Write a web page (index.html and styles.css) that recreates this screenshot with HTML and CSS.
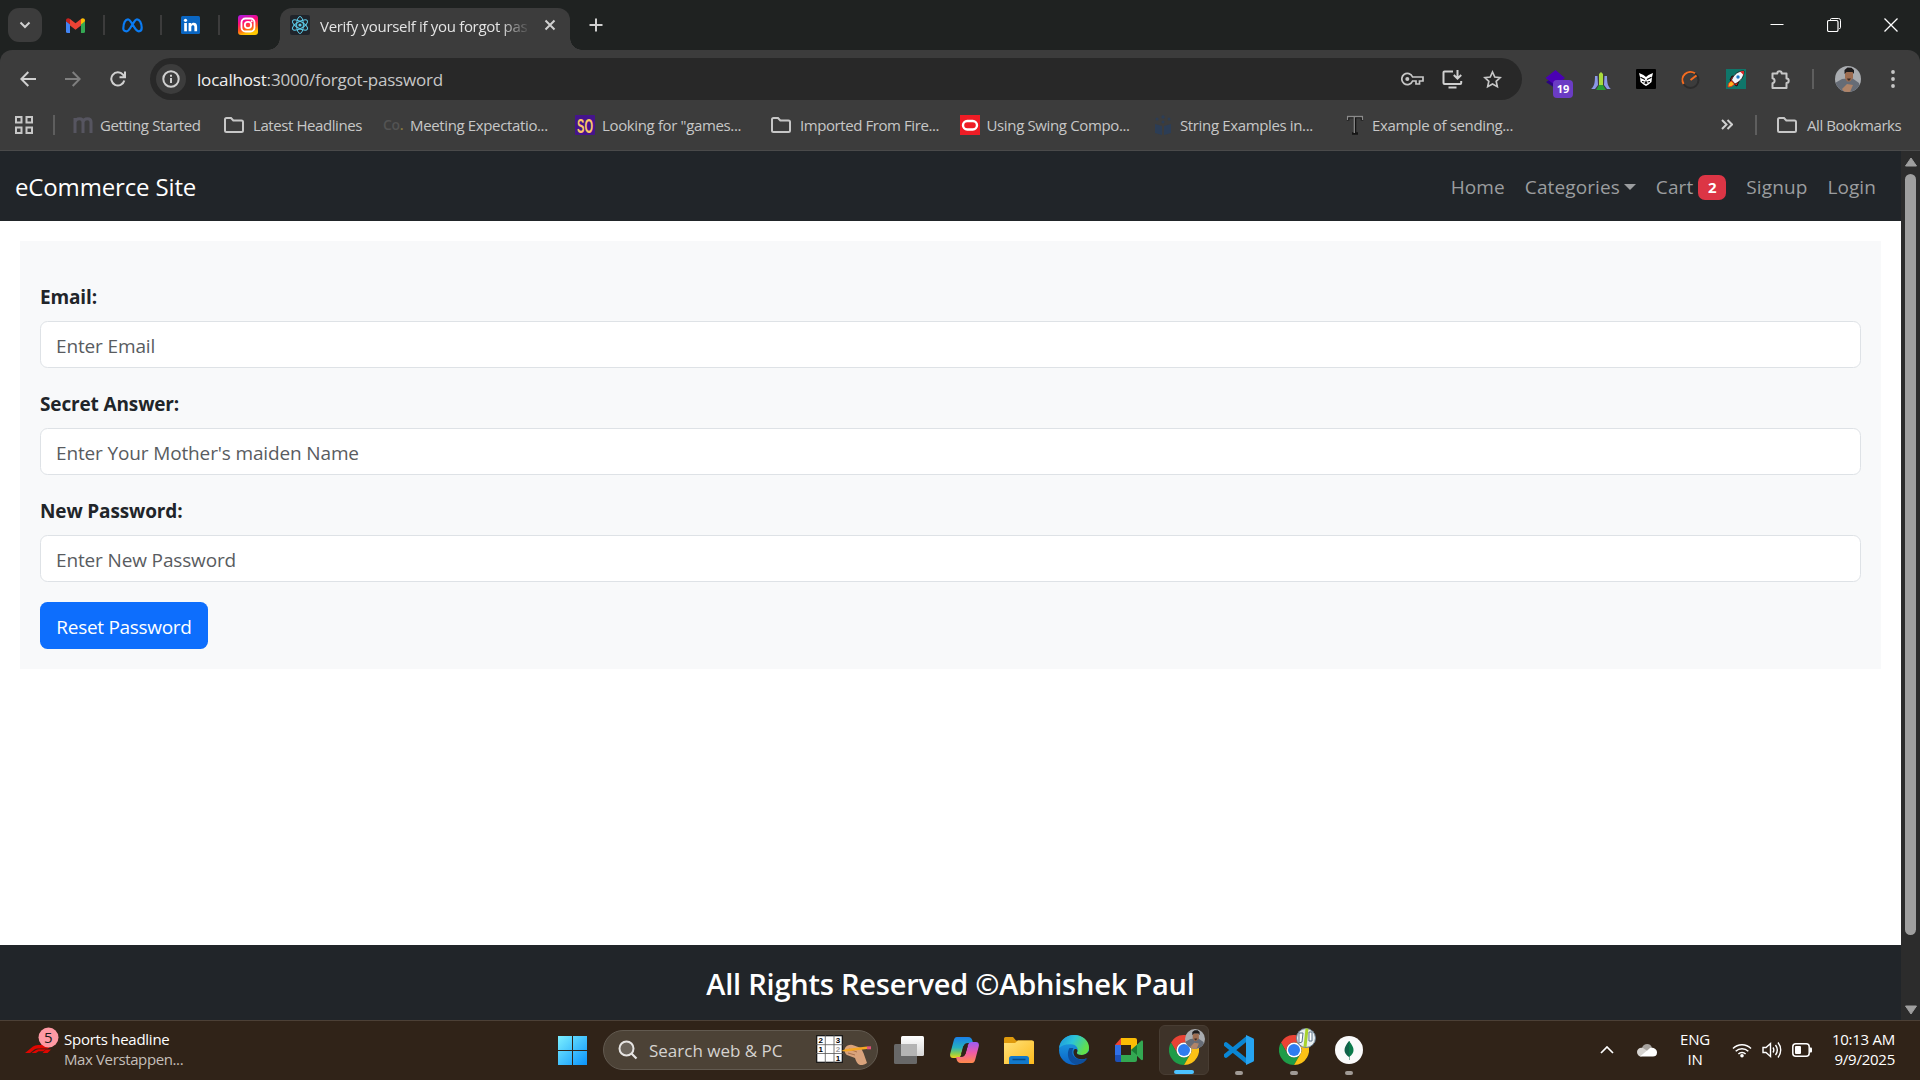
FILE: index.html
```html
<!DOCTYPE html>
<html lang="en">
<head>
<meta charset="utf-8">
<title>Verify yourself if you forgot password</title>
<link rel="stylesheet" href="styles.css">
</head>
<body>
<svg class="defs" width="0" height="0" aria-hidden="true">
  <defs>
    <linearGradient id="ig" x1="0" y1="0" x2="0.3" y2="1"><stop offset="0" stop-color="#a21df0"/><stop offset=".4" stop-color="#ff0a7a"/><stop offset=".75" stop-color="#ff5a1c"/><stop offset="1" stop-color="#ffc800"/></linearGradient>
    <linearGradient id="win" x1="0" y1="0" x2="1" y2="1"><stop offset="0" stop-color="#7cf0ff"/><stop offset="1" stop-color="#0a93fb"/></linearGradient>
    <linearGradient id="tv" x1="0" y1="0" x2="0" y2="1"><stop offset="0" stop-color="#fff"/><stop offset="1" stop-color="#d6d6d6"/></linearGradient>
    <linearGradient id="cpA" x1="0" y1="0" x2="0" y2="1"><stop offset="0" stop-color="#1a7fe8"/><stop offset=".5" stop-color="#26b0c0"/><stop offset=".8" stop-color="#8ed04a"/><stop offset="1" stop-color="#f2d21c"/></linearGradient>
    <linearGradient id="cpB" x1="0" y1="0" x2="0" y2="1"><stop offset="0" stop-color="#9a5cf5"/><stop offset=".5" stop-color="#ee5aa8"/><stop offset="1" stop-color="#ff8a4a"/></linearGradient>
    <linearGradient id="fold" x1="0" y1="0" x2="1" y2="1"><stop offset="0" stop-color="#ffe27a"/><stop offset="1" stop-color="#fdba1c"/></linearGradient>
    <linearGradient id="edA" x1="0" y1="0" x2="1" y2=".4"><stop offset="0" stop-color="#1a8fe0"/><stop offset=".5" stop-color="#2cc4d8"/><stop offset="1" stop-color="#62e04a"/></linearGradient>
    <linearGradient id="edB" x1="0" y1="0" x2="0" y2="1"><stop offset="0" stop-color="#1fa6e8"/><stop offset="1" stop-color="#0b62c4"/></linearGradient>
    <symbol id="chrome" viewBox="0 0 48 48">
      <path fill="#ea4335" d="M24 12h20.8A24 24 0 0 0 3.2 12l10.4 18A12 12 0 0 1 24 12z"/>
      <path fill="#1e9c48" d="M13.6 30 3.2 12A24 24 0 0 0 24 48l10.4-18a12 12 0 0 1-20.8 0z"/>
      <path fill="#fbc116" d="M34.4 30 24 48a24 24 0 0 0 20.8-36H24a12 12 0 0 1 10.4 18z"/>
      <circle cx="24" cy="24" r="12" fill="#fff"/><circle cx="24" cy="24" r="9.6" fill="#2f7cf0"/>
    </symbol>
    <symbol id="folder" viewBox="0 0 22 18"><path d="M2 3.5a1.5 1.5 0 0 1 1.500-1.500H8l2.300 2.500H18.500A1.500 1.500 0 0 1 20 6v8.500a1.500 1.500 0 0 1-1.500 1.500h-15A1.500 1.500 0 0 1 2 14.500z" fill="none" stroke="#c7c7c7" stroke-width="2"/></symbol>
    <symbol id="face" viewBox="0 0 26 26">
      <clipPath id="faceclip"><circle cx="13" cy="13" r="13"/></clipPath>
      <g clip-path="url(#faceclip)"><rect width="26" height="26" fill="#a9acb0"/><path d="M0 26V17l7-4 10-1 7 5 2 9z" fill="#666c76"/><path d="M7 23l5-5 6 1-3 7H9z" fill="#b08468"/><path d="M10 6h8v6l-3 3.500h-3L10 12z" fill="#9d6d51"/><path d="M9.500 8V4l3-2.500 4 .2L19 4v4l-1.500-2h-6z" fill="#1d1b1c"/><path d="M12 12.500h4l-1.500 2h-1.500z" fill="#3b2a25"/></g>
    </symbol>
  </defs>
</svg>

<div class="screen">
  <header class="tabstrip">
    <div class="tab-search"><svg width="12" height="8" viewBox="0 0 12 8"><path d="M1.500 1.500 6 6l4.500-4.500" class="ln2"/></svg></div>
    <div class="pin divided"><svg width="19" height="15" viewBox="0 0 19 15"><path fill="#4285f4" d="M0 3v10.500A1.500 1.500 0 0 0 1.500 15H4V6z"/><path fill="#34a853" d="M15 15h2.500a1.500 1.500 0 0 0 1.500-1.500V3l-4 3z"/><path fill="#ea4335" d="M4 1v6.500l5.500 4.200L15 7.500V1L9.500 5.200z"/><path fill="#c5221f" d="M0 3.200 4 6.500V1C2.500-.7 0 .3 0 2.200z"/><path fill="#fbbc04" d="M19 3.200 15 6.500V1c1.500-1.700 4-.7 4 1.200z"/></svg></div>
    <div class="pin divided"><svg width="21" height="15" viewBox="0 0 21 15"><path d="M1.300 10.500C1.300 5 3.500 1.300 6 1.300c3.500 0 6.500 12 10.800 12 2 0 2.900-1.300 2.900-3.500C19.700 5 17.500 1.300 15 1.300c-3.500 0-6.500 12-10.500 12-2.200 0-3.200-1.200-3.200-2.800z" fill="none" stroke="#0a7bf2" stroke-width="2.200"/></svg></div>
    <div class="pin divided"><svg width="19" height="18" viewBox="0 0 19 18"><rect width="19" height="18" rx="1.500" fill="#0a66c2"/><g fill="#fff"><circle cx="4.500" cy="4.300" r="1.600"/><rect x="3.200" y="7" width="2.700" height="8.300"/><path d="M7.600 7h2.600v1.200c1.400-2.200 5.900-1.900 5.900 2.300v4.800h-2.700v-4.200c0-2.600-3.100-2.300-3.100 0v4.200H7.600z"/></g></svg></div>
    <div class="pin"><svg width="20" height="20" viewBox="0 0 20 20"><rect width="20" height="20" rx="3" fill="url(#ig)"/><g fill="none" stroke="#fff" stroke-width="1.800"><rect x="3.500" y="3.500" width="13" height="13" rx="4"/><circle cx="10" cy="10" r="3.200"/></g><circle cx="13.700" cy="6.300" r="1" fill="#fff"/></svg></div>
    <div class="tab">
      <svg class="react" width="20" height="20" viewBox="0 0 20 20"><rect width="20" height="20" rx="2" fill="#20242b"/><g fill="none" stroke="#5ccbe8" stroke-width="1"><ellipse cx="10" cy="10" rx="8.500" ry="3.400" transform="rotate(30 10 10)"/><ellipse cx="10" cy="10" rx="8.500" ry="3.400" transform="rotate(90 10 10)"/><ellipse cx="10" cy="10" rx="8.500" ry="3.400" transform="rotate(150 10 10)"/></g><circle cx="10" cy="10" r="1.600" fill="#5ccbe8"/></svg>
      <span class="tab-title">Verify yourself if you forgot pas</span>
      <svg width="12" height="12" viewBox="0 0 12 12"><path d="m1.500 1.500 9 9m0-9-9 9" class="ln2"/></svg>
    </div>
    <div class="newtab"><svg width="14" height="14" viewBox="0 0 14 14"><path d="M7 .5v13M.5 7h13" class="ln2"/></svg></div>
    <div class="winbtns">
      <svg width="14" height="14" viewBox="0 0 14 14"><path d="M.5 6.500h13" stroke="#fff"/></svg>
      <svg width="14" height="14" viewBox="0 0 14 14"><path d="M3.500 2V1.500a1 1 0 0 1 1-1h7a2 2 0 0 1 2 2v7a1 1 0 0 1-1 1H12" fill="none" stroke="#fff"/><rect x=".5" y="2.500" width="10.500" height="11" rx="1.500" fill="none" stroke="#fff" stroke-width="1.200"/></svg>
      <svg width="14" height="14" viewBox="0 0 14 14"><path d="m.5.5 13 13m0-13-13 13" stroke="#fff" stroke-width="1.300"/></svg>
    </div>
  </header>

  <div class="chrome-bar">
    <div class="toolbar">
      <div class="nav-ic"><svg width="16" height="16" viewBox="0 0 16 16"><path d="M16 8H1.500M8.300 1 1.300 8l7 7" class="ln2"/></svg></div>
      <div class="nav-ic dim"><svg width="16" height="16" viewBox="0 0 16 16"><path d="M0 8h14.500M7.700 1l7 7-7 7" class="ln2"/></svg></div>
      <div class="nav-ic"><svg width="16" height="16" viewBox="0 0 16 16"><path d="M14.300 9.500A6.600 6.600 0 1 1 13 3.700L14.700 6M15 .5v5.700H9.500" class="ln2"/></svg></div>
      <div class="omnibox">
        <span class="info"><svg width="18" height="18" viewBox="0 0 18 18"><circle cx="9" cy="9" r="7.700" class="ln2"/><path d="M9 8v5M9 4.700v2" class="ln2"/></svg></span>
        <span class="url"><b>localhost</b>:3000/forgot-password</span>
        <span class="omni-ic"><svg width="23" height="14" viewBox="0 0 23 14"><path d="M11.600 5A5.600 5.600 0 1 0 11.600 9H15v3h3.500V9H22V5z" fill="none" stroke="#c7c7c7" stroke-width="1.700"/><circle cx="6.300" cy="7" r="2" fill="#c7c7c7"/></svg></span>
        <span class="omni-ic"><svg width="21" height="19" viewBox="0 0 21 19"><path d="M11 1.500H2.500a1 1 0 0 0-1 1V13a1 1 0 0 0 1 1h15.700a1 1 0 0 0 1-1v-2M6.500 17.500h8M15.500 0v8M11.800 5l3.700 3.700L19.200 5" class="ln2"/></svg></span>
        <span class="omni-ic"><svg width="19" height="19" viewBox="0 0 19 19"><path d="m9.500 2 2.300 5 5.400.6-4 3.700 1.100 5.400-4.800-2.700-4.800 2.700 1.100-5.400-4-3.700 5.400-.6z" fill="none" stroke="#c7c7c7" stroke-width="1.700"/></svg></span>
      </div>
      <div class="exts">
        <span class="ext"><svg width="21" height="19" viewBox="0 0 21 19"><path fill="#2a0480" d="M1 12l9.500-6 9 6-9 6.500z"/><path fill="#4a00b4" d="M10.500 0 20 8l-9.500 7.500L.5 8z"/></svg><i class="count">19</i></span>
        <span class="ext low"><svg width="20" height="18" viewBox="0 0 20 18"><path fill="#8b98e8" d="M4 4h2.500l.5 9-3 4H0c3-2 4-6 4-13zm9.500 0H16c0 7 1 11 4 13h-4l-3-4z"/><path fill="#a9dc3c" d="M8 2l2-2 2 2v12H8z"/><path fill="#299c34" d="M5 18l3-5h4l3 5z"/></svg></span>
        <span class="ext"><svg width="20" height="20" viewBox="0 0 20 20"><rect width="20" height="20" rx="1" fill="#000"/><path fill="#fff" d="M3 4l4.500 2L10 8l2.500-2L17 4l-1 4-.5 5-3 2.500L10 17l-2.500-1.500-3-2.500L4 8z"/><path d="M4.500 8.200 9 10.500M15.500 8.200 11 10.500M6 12.500l2.500.5M14 12.500l-2.500.5M9 15l1-2.500 1 2.500" fill="none" stroke="#000" stroke-width="1.100"/></svg></span>
        <span class="ext"><svg width="19" height="19" viewBox="0 0 19 19"><circle cx="9.500" cy="10" r="8" fill="none" stroke="#2c2c2c" stroke-width="2"/><path d="M2.600 14A8 8 0 0 1 14 3.300" fill="none" stroke="#f36c21" stroke-width="2"/><path d="M9.500 10l6-4.500" stroke="#f36c21" stroke-width="2"/></svg></span>
        <span class="ext"><svg width="20" height="20" viewBox="0 0 20 20"><rect width="20" height="20" fill="#0f766a"/><path fill="#e51e1e" stroke="#111" d="M4 11l2-4 4 1 3 4-2 5-2-1z"/><path fill="#f2f5fa" stroke="#111" stroke-width=".8" d="M5.500 11C8 5 12 2 18 2c0 6-3 10-9 13z"/><path fill="#e51e1e" d="M14 2.500 18 2l-.4 4z"/><circle cx="12" cy="8" r="1.700" fill="#1e78c8"/><path fill="#ffb31c" stroke="#e51e1e" stroke-width=".8" d="M2 18c0-3 1-5 3.500-6l3 3C7 17 5 18 2 18z"/></svg></span>
        <span class="ext"><svg width="21" height="21" viewBox="0 0 21 21"><path d="M2.500 4.500h4.800a2.200 2.200 0 1 1 4.400 0H16.500v5a2.200 2.200 0 1 1 0 4.400v5.100h-14v-4.700a2.600 2.600 0 0 0 0-5.100z" fill="none" stroke="#c7c7c7" stroke-width="2" stroke-linejoin="round"/></svg></span>
      </div>
      <i class="vsep"></i>
      <span class="ext"><svg width="26" height="26"><use href="#face"/></svg></span>
      <span class="ext"><svg width="4" height="18" viewBox="0 0 4 18"><g fill="#c7c7c7"><circle cx="2" cy="2" r="1.900"/><circle cx="2" cy="9" r="1.900"/><circle cx="2" cy="16" r="1.900"/></g></svg></span>
    </div>

    <div class="bookmarks">
      <svg class="apps" width="18" height="18" viewBox="0 0 18 18"><g fill="none" stroke="#c7c7c7" stroke-width="2"><rect x="1" y="1" width="5.500" height="5.500"/><rect x="11.500" y="1" width="5.500" height="5.500"/><rect x="1" y="11.500" width="5.500" height="5.500"/><rect x="11.500" y="11.500" width="5.500" height="5.500"/></g></svg>
      <i class="vsep"></i>
      <div class="marks">
        <span class="bm"><svg width="20" height="16" viewBox="0 0 20 16"><path d="M2 16V1M2 5c1-4.500 8-4.500 8 0v11M10 5c1-4.500 8-4.500 8 0v11" fill="none" stroke="#565560" stroke-width="3"/></svg>Getting Started</span>
        <span class="bm fold"><svg width="22" height="18"><use href="#folder"/></svg>Latest Headlines</span>
        <span class="bm"><span class="co">Co<em>.</em></span>Meeting Expectatio...</span>
        <span class="bm"><svg width="20" height="20" viewBox="0 0 20 20"><rect width="20" height="20" rx="1" fill="#45148c"/><text class="so" x="2" y="17.500" textLength="16" lengthAdjust="spacingAndGlyphs">SO</text></svg>Looking for "games...</span>
        <span class="bm fold"><svg width="22" height="18"><use href="#folder"/></svg>Imported From Fire...</span>
        <span class="bm"><svg width="20" height="20" viewBox="0 0 20 20"><rect width="20" height="20" fill="#ee1c25"/><rect x="3" y="6" width="14" height="8.500" rx="4.200" fill="none" stroke="#fff" stroke-width="2.400"/></svg>Using Swing Compo...</span>
        <span class="bm"><svg width="20" height="20" viewBox="0 0 20 20"><g fill="#2c3d55"><path d="M2 9l7 2v9l-7-2zM18 9l-7 2v9l7-2z"/><circle cx="10" cy="2" r="1.700"/><circle cx="4" cy="4" r="1.500"/><circle cx="16" cy="4" r="1.500"/><circle cx="10" cy="7" r="1.500"/></g></svg>String Examples in...</span>
        <span class="bm"><svg width="20" height="20" viewBox="0 0 20 20"><path d="M3 5.500V2h14v3.500M10 2v16M7 18.500h6" fill="none" stroke="#151515" stroke-width="2.500"/><path d="M2.500 5V1.500h15V5M9.300 2v16" fill="none" stroke="#8a8a8a" stroke-width="1.300"/></svg>Example of sending...</span>
      </div>
      <svg class="more" width="12" height="11" viewBox="0 0 12 11"><path d="m1 1 4.500 4.500L1 10m5.500-9L11 5.500 6.500 10" class="ln2"/></svg>
      <i class="vsep"></i>
      <span class="bm all"><svg width="22" height="18"><use href="#folder"/></svg>All Bookmarks</span>
    </div>
  </div>

  <div class="viewport">
    <div class="page">
      <nav class="navbar">
        <a class="brand">eCommerce Site</a>
        <div class="links"><a>Home</a><a class="dropdown">Categories</a><a>Cart <span class="badge">2</span></a><a>Signup</a><a>Login</a></div>
      </nav>
      <main class="main">
        <form class="card">
          <label>Email:</label><input placeholder="Enter Email">
          <label>Secret Answer:</label><input placeholder="Enter Your Mother's maiden Name">
          <label>New Password:</label><input placeholder="Enter New Password">
          <button type="button">Reset Password</button>
        </form>
      </main>
      <footer class="footer">All Rights Reserved ©Abhishek Paul</footer>
    </div>
    <div class="scrollbar">
      <svg width="14" height="10" viewBox="0 0 14 10"><path d="M7 1l5.500 8h-11z" fill="#9f9f9f" stroke="#9f9f9f" stroke-linejoin="round"/></svg>
      <i class="thumb"></i>
      <svg width="14" height="10" viewBox="0 0 14 10"><path d="M7 9l5.500-8h-11z" fill="#9f9f9f" stroke="#9f9f9f" stroke-linejoin="round"/></svg>
    </div>
  </div>

  <div class="taskbar">
    <div class="widget">
      <svg width="34" height="28" viewBox="0 0 34 28"><path fill="#e10600" d="M0 26l8-6.500q2-1.500 5-1.500h14l-4 3.500H13q-2 0-3.500 1L5 26zM6.500 26l4.500-3q1-.7 3-.7h7l-2.500 2h-5L11 26zM17.500 26l3.500-3.500h5L22.500 26z"/><circle cx="23.500" cy="10.500" r="10" fill="#ff99a4"/></svg><b class="num">5</b>
      <div class="headline"><span>Sports headline</span><span class="sub">Max Verstappen...</span></div>
    </div>
    <div class="apps-row">
      <svg class="start" width="29" height="29" viewBox="0 0 29 29"><path fill="url(#win)" d="M0 0h14v14H0zM15 0h14v14H15zM0 15h14v14H0zM15 15h14v14H15z"/></svg>
      <div class="search">
        <svg width="20" height="20" viewBox="0 0 20 20"><circle cx="8.500" cy="8.500" r="7" fill="#6b645b" stroke="#e6e4e2" stroke-width="2"/><path d="m13.500 13.500 5 5" stroke="#e6e4e2" stroke-width="2.200"/></svg>
        <span>Search web &amp; PC</span>
        <svg class="sudoku" width="57" height="30" viewBox="0 0 57 30"><rect x=".7" y=".7" width="25.600" height="26.600" fill="#fff" stroke="#111" stroke-width="1.200"/><path d="M9.300 0v28M18 0v28M0 9.700h27M0 18.500h27" stroke="#555" stroke-width=".8"/><g class="digits"><text x="2.500" y="8">2</text><text x="19.800" y="8">3</text><text x="2.500" y="17">1</text><text x="19.800" y="17" fill="#999">2</text><text x="19.800" y="26">1</text></g><path fill="#d9a37c" d="M29 13c2-3 6-4 9-2.500l7 2.500 2.500 5 3.500 10q-3 2.500-7 2c-3-1-4-4-5-7l-8-3c-2-1-3-4-2-7z"/><path d="M33 14l8 3M32 18l7 2" stroke="#a8714c" fill="none"/><path d="M25 16l5-2 21-2.500v2.600L30 16.500z" fill="#f5a623"/><path d="M51 11.300h4v3h-4z" fill="#e0527a"/></svg>
      </div>
      <span class="app"><svg width="30" height="28" viewBox="0 0 30 28"><rect x="0" y="8" width="23" height="20" rx="1.500" fill="#686868"/><rect x="7" y="0" width="23" height="20" rx="1.500" fill="url(#tv)"/><path d="M7 8h16v12H8.500A1.500 1.500 0 0 1 7 18.500z" fill="#b4b4b4"/></svg></span>
      <span class="app"><svg width="29" height="30" viewBox="0 -1 29 28"><path fill="url(#cpA)" d="M7 0h11c3 0 4 2 4.500 4l.5 2h-5c-3 0-4 1.500-4.700 4L11 18c-.5 2-2 3-4 3H3c-2.500 0-3.500-2-2.600-5L3.600 4C4.300 1.300 5 0 7 0z"/><path fill="url(#cpB)" d="M22 26H11c-3 0-4-2-4.500-4L6 20h5c3 0 4-1.500 4.700-4L18 8c.5-2 2-3 4-3h4c2.500 0 3.500 2 2.600 5l-3.200 12c-.7 2.700-1.400 4-3.400 4z"/><path fill="#302318" d="M13.300 9h4.400L15.500 17h-4.300z"/></svg></span>
      <span class="app"><svg width="30" height="27" viewBox="0 0 30 27"><path fill="#df9a0c" d="M0 1.500A1.500 1.500 0 0 1 1.500 0H9l3 3.500h16V10H0z"/><path fill="url(#fold)" d="M0 6h11l3-2.500h14.500A1.500 1.500 0 0 1 30 5v22H0z"/><path fill="#1279cc" d="M5 27v-5.500A2.500 2.500 0 0 1 7.500 19h15a2.500 2.500 0 0 1 2.500 2.500V27z"/><path d="M8.500 22.500h13" stroke="#064a86" stroke-width="1.500"/></svg></span>
      <span class="app"><svg width="30" height="30" viewBox="0 0 30 30"><circle cx="15" cy="15" r="15" fill="url(#edB)"/><path fill="url(#edA)" d="M0 13C1 5 7.500 0 15 0c9 0 15 6 15 12.500 0 5-3.500 7.500-7.500 7.500-3.500 0-5-1.500-4.500-2.500 1.500-2 1-7-4-8C8 8.500 3 10 0 13z"/><path fill="#0d4f9e" d="M10.500 13c-4 7 0 17 8.500 16.500 4-.5 7.500-3 9.500-6.500-4 2.500-9 2-12.500-.5-3-2.200-3.500-6-1.500-9.500z"/><path fill="#302318" d="M15.500 14.200c2.500-1.200 3.800 1.300 2.400 3.300-.5 1 1 2.500 4.600 2.500 3 0 5.500-1.200 7.500-4v6l-2 1c-4 2-9 1.500-11.500-1-2-2.200-2.800-6-1-7.800z"/></svg></span>
      <span class="app"><svg width="28" height="24" viewBox="0 0 28 24"><path fill="#ea4335" d="M6 0v7H0z"/><path fill="#fbbc04" d="M6 0h14a2 2 0 0 1 2 2v8l-6 3V7H6z"/><path fill="#2f6fe8" d="M0 7h6v10H0z"/><path fill="#1d50b8" d="M0 17h6v7H2a2 2 0 0 1-2-2z"/><path fill="#33a852" d="M6 17h10v-4l6-3v12a2 2 0 0 1-2 2H6zM16 12l10-9c1-.8 2-.3 2 1v17c0 1.200-1 1.500-2 .8z"/><path fill="#197c34" d="M16 12l6-5v10z"/></svg></span>
      <span class="app active"><svg width="30" height="30"><use href="#chrome"/></svg><svg class="over" width="20" height="20"><use href="#face"/></svg></span>
      <span class="app run"><svg width="30" height="30" viewBox="0 0 30 30"><path d="M2 9.500 23 26.500M2 20.500 23 3.500" stroke="#0a86d4" stroke-width="4.500" stroke-linecap="round"/><path fill="#26a4f2" d="M22 0l7 3.200c.7.300 1 .8 1 1.500v20.600c0 .7-.3 1.200-1 1.500L22 30z"/><path fill="#302318" d="M22 9v12l-8-6z"/></svg></span>
      <span class="app run"><svg width="30" height="30"><use href="#chrome"/></svg><svg class="over" width="20" height="20" viewBox="0 0 20 20"><circle cx="10" cy="10" r="9.500" fill="#e8eef0" stroke="#6b7f92"/><path d="M3 5l4 0-1 9-3 1zM13 4h3v9h-3z" fill="#fff" stroke="#5a7388"/><path d="M11 .5 9 19" stroke="#a8d32e" stroke-width="3"/></svg></span>
      <span class="app run"><svg width="28" height="28" viewBox="0 0 28 28"><circle cx="14" cy="14" r="14" fill="#fafafa"/><path fill="#116149" d="M14 5c-6 7-6 12 0 16v3h.5V5z"/><path fill="#0a7a4a" d="M14 5c6 7 6 12 0 16z"/></svg></span>
    </div>
    <div class="tray">
      <svg class="chev" width="14" height="8" viewBox="0 0 14 8"><path d="m1 7 6-6 6 6" fill="none" stroke="#fff" stroke-width="1.700"/></svg>
      <svg class="cloud" width="20" height="14" viewBox="0 0 20 14"><path fill="#a6a29e" d="M5 5C6 .5 13-1 15 4.500l-6 4z"/><path fill="#d6d3d0" d="M0 9c0-3 3-5 6-4l6 4-8 4.500C2 13.500 0 11.500 0 9z"/><path fill="#fff" d="M3 13.500 13 5c3.500-.8 7 1.500 7 4.500s-2 4-4 4z"/></svg>
      <div class="lang"><span>ENG</span><span>IN</span></div>
      <svg class="wifi" width="20" height="16" viewBox="0 0 20 16"><g fill="none" stroke="#fff" stroke-width="1.500"><path d="M1 6.500a12.500 12.500 0 0 1 18 0M3.700 9.300a8.800 8.800 0 0 1 12.600 0M6.400 12a5 5 0 0 1 7.200 0"/></g><circle cx="10" cy="13.700" r="1.800" fill="#fff"/></svg>
      <svg class="snd" width="20" height="18" viewBox="0 0 20 18"><g fill="none" stroke="#fff" stroke-width="1.400"><path d="M1 6.500h3l4.500-4v13L4 11.500H1zM11 6.500c1 1.500 1 3.500 0 5M13.500 4c2.200 3 2.200 7 0 10M16 1.500c3.600 4.500 3.600 10.500 0 15"/></g></svg>
      <svg class="bat" width="20" height="14" viewBox="0 0 20 14"><rect x=".8" y=".8" width="16.400" height="12.400" rx="3" fill="none" stroke="#fff" stroke-width="1.500"/><rect x="3" y="3" width="6" height="8" rx="1" fill="#fff"/><path d="M17.500 4.500h1.500q1 0 1 1v3q0 1-1 1h-1.500z" fill="#fff"/></svg>
      <div class="clock"><span>10:13 AM</span><span>9/9/2025</span></div>
    </div>
  </div>
</div>
</body>
</html>
```
FILE: styles.css
```css
* { box-sizing: border-box; }
body { margin: 0; font-family: "Open Sans", "Noto Sans", sans-serif; }
svg { display: block; flex: none; }
.defs { position: absolute; }
.ln2 { fill: none; stroke: #d0d0d0; stroke-width: 2; }

.screen { width: 1920px; height: 1080px; display: flex; flex-direction: column; overflow: hidden; background: #1f2221; }
.tabstrip, .chrome-bar, .taskbar, .navbar, .card, .footer { flex: none; }

/* tab strip */
.tabstrip { height: 50px; display: flex; align-items: center; padding-left: 8px; }
.tab-search { width: 34px; height: 34px; margin-right: 5px; border-radius: 11px; background: #3c3c3c; display: grid; place-items: center; }
.pin { width: 57.5px; height: 20px; display: grid; place-items: center; }
.pin.divided { border-right: 2px solid #3c3c3c; padding-left: 1px; }
.tab { width: 290px; height: 42px; align-self: flex-end; margin-left: 3px; padding: 0 14px 8px 10px; display: flex; align-items: center; background: #3c3c3c; border-radius: 12px 12px 0 0; position: relative; }
.tab::before, .tab::after { content: ""; position: absolute; bottom: 0; width: 12px; height: 12px; }
.tab::before { left: -12px; background: radial-gradient(circle at 0 0, transparent 11.500px, #3c3c3c 12px); }
.tab::after { right: -12px; background: radial-gradient(circle at 100% 0, transparent 11.500px, #3c3c3c 12px); }
.tab-title { width: 219px; margin: 1px 5px 0 10px; white-space: nowrap; font-size: 15px; color: #e3e3e3; letter-spacing: -.31px; -webkit-mask-image: linear-gradient(90deg, #000 180px, transparent 211px); mask-image: linear-gradient(90deg, #000 180px, transparent 211px); }
.newtab { width: 52px; display: grid; place-items: center; }
.winbtns { display: flex; gap: 43px; margin-left: auto; padding-right: 22px; }

/* toolbar */
.chrome-bar { height: 101px; background: #3c3c3c; border-radius: 12px 12px 0 0; border-bottom: 1px solid #4a4a4a; }
.toolbar { height: 58px; padding-left: 5px; display: flex; align-items: center; }
.nav-ic { width: 45px; display: grid; place-items: center; }
.dim { opacity: .45; }
.omnibox { width: 1372px; height: 42px; margin: 0 11px 0 10px; padding: 0 10px 0 6px; border-radius: 21px; background: #282828; display: flex; align-items: center; }
.info { width: 30px; height: 30px; border-radius: 50%; background: #3c3c3c; display: grid; place-items: center; }
.url { margin: 1px auto 0 11px; font-size: 17px; color: #c7c7c7; letter-spacing: -.18px; }
.url b { font-weight: 400; color: #f0f0f0; }
.omni-ic { width: 40px; display: grid; place-items: center; }
.exts { display: flex; }
.ext { width: 45px; height: 26px; display: grid; place-items: center; position: relative; }
.low { padding-top: 4px; }
.count { position: absolute; left: 20px; top: 14px; width: 20px; height: 18px; border-radius: 4px; background: #6b3cc4; color: #fff; font: 700 11px/18px "Open Sans", sans-serif; text-align: center; }
.vsep { width: 2px; height: 20px; background: #5e5e5e; flex: none; margin: 0 11px 0 9px; }

.bookmarks { height: 33px; display: flex; align-items: center; padding-left: 15px; font-size: 15px; color: #c7c7c7; }
.bookmarks .vsep { margin: 0 18px 0 20px; }
.marks { display: grid; grid-template-columns: 150px 160px 192px 195px 189.500px 193.500px 192px 200px; }
.bm { display: flex; align-items: center; gap: 7px; white-space: nowrap; letter-spacing: -.36px; }
.bm.fold, .bm.all { gap: 8px; }
.bm.fold { letter-spacing: -.42px; }
.bm.all { gap: 9px; letter-spacing: -.44px; }
.co { width: 20px; font-weight: 600; font-size: 14px; color: #535353; }
.co em { color: #8a7a3c; font-style: normal; }
.so { fill: #fbc766; font: 700 21px "Liberation Sans", sans-serif; letter-spacing: 0; }
.more { margin-left: auto; }
.bookmarks .more + .vsep { margin: 0 19px 0 22px; }
.all { width: 144px; }

/* page */
.viewport { flex: 1; min-height: 0; display: flex; }
.page { width: 1901px; display: flex; flex-direction: column; background: #fff; }
.navbar { height: 70px; background: #212529; display: flex; align-items: center; justify-content: space-between; padding: 2px 25px 0 15px; }
.brand { margin-top: -2px; font-size: 24px; color: #fff; letter-spacing: -.15px; }
.links { display: flex; gap: 20px; font-size: 19px; color: #9b9d9f; letter-spacing: .1px; }
.links a { display: flex; align-items: center; }
.dropdown::after { content: ""; margin-left: 4px; border: 6px solid transparent; border-top-color: currentColor; border-bottom: 0; }
.badge { width: 28px; height: 25px; margin-left: 5px; border-radius: 7px; background: #dc3545; color: #fff; font: 700 15px/25px "Open Sans", sans-serif; text-align: center; }
.main { flex: 1; padding-top: 20px; }
.card { height: 428px; margin: 0 20px; padding: 40px 20px 20px; background: #f8f9fa; display: flex; flex-direction: column; }
.card label { height: 40px; font-size: 19px; font-weight: 700; line-height: 32px; letter-spacing: -.14px; color: #212529; }
.card input { height: 47px; margin-bottom: 20px; padding: 2px 15px 0; border: 1px solid #dee2e6; border-radius: 7.500px; background: #fff; font: 400 19px "Open Sans", sans-serif; letter-spacing: -.14px; }
.card input::placeholder { color: #595c5f; opacity: 1; }
.card button { width: 168px; height: 47px; padding: 2px 0 0; border: 0; border-radius: 7.500px; background: #0d6efd; color: #fff; font: 400 19px "Open Sans", sans-serif; letter-spacing: -.3px; white-space: nowrap; }
.footer { height: 75px; background: #212529; color: #fff; font-size: 29px; font-weight: 600; line-height: 78px; letter-spacing: -.22px; text-align: center; }
.scrollbar { width: 19px; background: #2c2c2c; display: flex; flex-direction: column; align-items: center; padding: 6px 0 5px; }
.thumb { width: 11px; height: 761px; margin: 7px 0 auto; border-radius: 6px; background: #9f9f9f; }

/* taskbar */
.taskbar { height: 60px; border-top: 1px solid #4c4036; background: #302318; color: #fff; display: grid; grid-template-columns: 558px 1fr 320px; padding-bottom: 1px; }
.widget { display: flex; align-items: flex-start; padding: 6px 0 0 25px; position: relative; font-size: 15px; }
.num { position: absolute; left: 44px; top: 6px; font-weight: 400; color: #1a1a1a; line-height: 20px; }
.headline { display: flex; flex-direction: column; line-height: 20px; margin: 2px 0 0 5px; letter-spacing: -.25px; }
.sub { color: #c4bfba; letter-spacing: -.38px; }
.apps-row { display: flex; align-items: center; }
.search { width: 275px; height: 40px; margin: 0 6px 0 16px; padding: 0 4px 0 14px; border-radius: 20px; border: 1px solid #625a50; background: #4c4236; display: flex; align-items: center; font-size: 17px; color: #d6d3d0; white-space: nowrap; }
.search span { margin-left: 11px; }
.sudoku { margin-left: auto; }
.digits { font: 700 8px "Liberation Sans", sans-serif; }
.app { width: 50px; height: 50px; margin-right: 5px; display: grid; place-items: center; position: relative; border-radius: 6px; }
.active { background: #3e3329; border: 1px solid #483d33; }
.over { position: absolute; right: 3px; top: 3px; }
.active::after, .run::after { content: ""; position: absolute; bottom: 0; left: 21px; width: 8px; height: 4px; border-radius: 2px; background: #a09a95; }
.active::after { left: 14px; width: 20px; background: #4cc2ff; }
.tray { display: flex; align-items: center; font-size: 15px; line-height: 20px; letter-spacing: -.25px; white-space: nowrap; }
.tray div { display: flex; flex-direction: column; margin-top: -2px; }
.cloud { margin-left: 23px; }
.lang { align-items: center; width: 32px; margin-left: 22px; }
.wifi { margin-left: 21px; }
.snd, .bat { margin-left: 10px; }
.tray .clock { align-items: flex-end; margin-left: auto; padding-right: 25px; }
```
